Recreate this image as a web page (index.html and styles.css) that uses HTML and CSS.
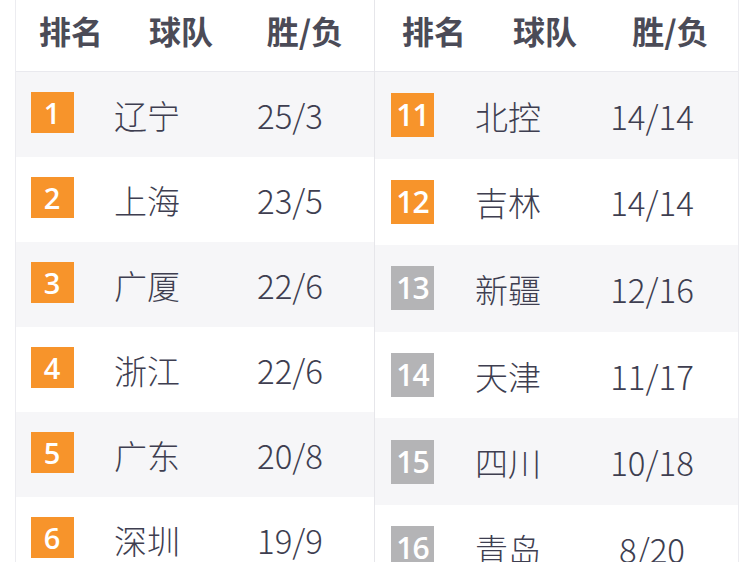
FILE: index.html
```html
<!DOCTYPE html>
<html lang="zh">
<head>
<meta charset="utf-8">
<link rel="stylesheet" href="styles.css">
</head>
<body>
<div class="board">
  <section class="panel left">
    <div class="head"><span class="h1">排名</span><span class="h2">球队</span><span class="h3">胜/负</span></div>
    <div class="row alt"><span class="c1"><b class="badge">1</b></span><span class="c2">辽宁</span><span class="c3">25/3</span></div>
    <div class="row"><span class="c1"><b class="badge">2</b></span><span class="c2">上海</span><span class="c3">23/5</span></div>
    <div class="row alt"><span class="c1"><b class="badge">3</b></span><span class="c2">广厦</span><span class="c3">22/6</span></div>
    <div class="row"><span class="c1"><b class="badge">4</b></span><span class="c2">浙江</span><span class="c3">22/6</span></div>
    <div class="row alt"><span class="c1"><b class="badge">5</b></span><span class="c2">广东</span><span class="c3">20/8</span></div>
    <div class="row"><span class="c1"><b class="badge">6</b></span><span class="c2">深圳</span><span class="c3">19/9</span></div>
  </section>
  <section class="panel right">
    <div class="head"><span class="h1">排名</span><span class="h2">球队</span><span class="h3">胜/负</span></div>
    <div class="row alt"><span class="c1"><b class="badge two">11</b></span><span class="c2">北控</span><span class="c3">14/14</span></div>
    <div class="row"><span class="c1"><b class="badge two">12</b></span><span class="c2">吉林</span><span class="c3">14/14</span></div>
    <div class="row alt"><span class="c1"><b class="badge two grey">13</b></span><span class="c2">新疆</span><span class="c3">12/16</span></div>
    <div class="row"><span class="c1"><b class="badge two grey">14</b></span><span class="c2">天津</span><span class="c3">11/17</span></div>
    <div class="row alt"><span class="c1"><b class="badge two grey">15</b></span><span class="c2">四川</span><span class="c3">10/18</span></div>
    <div class="row"><span class="c1"><b class="badge two grey">16</b></span><span class="c2">青岛</span><span class="c3">8/20</span></div>
  </section>
</div>
</body>
</html>
```
FILE: styles.css
```css
html, body {
  margin: 0;
  padding: 0;
  background: #ffffff;
  height: 562px;
  overflow: hidden;
}
body {
  font-family: "Noto Sans CJK SC", "Noto Sans", sans-serif;
  color: #3b3b4a;
}
.board {
  display: flex;
  padding-left: 15px;
}
.panel {
  display: flex;
  flex-direction: column;
  flex: none;
}
.left {
  width: 358px;
  border-left: 1px solid #ececf0;
  border-right: 1px solid #e6e6ea;
}
.right {
  width: 363px;
  border-right: 1px solid #ececf0;
}
.head {
  height: 72px;
  border-bottom: 1px solid #e9e9ee;
  display: flex;
  align-items: center;
  padding-bottom: 12px;
  box-sizing: border-box;
  font-size: 32px;
  font-weight: 700;
  color: #4b4b57;
  background: #fff;
}
.head span, .row span {
  display: flex;
  justify-content: center;
  align-items: center;
  flex: none;
}
.left .h1 { width: 110px; }
.left .h2 { width: 110px; }
.left .h3 { width: 138px; }
.right .h1 { width: 118px; }
.right .h2 { width: 104px; }
.right .h3 { width: 141px; padding-left: 6px; box-sizing: border-box; }

.row {
  display: flex;
  align-items: center;
  font-size: 33px;
  font-weight: 300;
  color: #3e3e50;
  background: #ffffff;
}
.left .row { height: 85px; }
.right .row { height: 86.6px; }
.row.alt { background: #f6f6f8; }
.row .c2 { padding-top: 1px; }
.row .c3 { padding-top: 1px; }
.left .c1 { width: 72px; }
.left .c2 { width: 118px; }
.left .c3 { width: 168px; }
.right .c1 { width: 75px; }
.right .c2 { width: 116px; }
.right .c3 { width: 172px; }

.badge {
  width: 43px;
  height: 41px;
  background: #f7942b;
  color: #ffffff;
  font-family: "Open Sans", "Noto Sans", sans-serif;
  font-weight: 600;
  font-size: 29px;
  line-height: 41px;
  text-align: center;
  margin-bottom: 4px;
}
.badge.two {
  height: 44px;
  line-height: 44px;
  font-size: 30px;
  letter-spacing: -1px;
  margin-bottom: 0;
}
.badge.grey { background: #b4b4b6; }
```
